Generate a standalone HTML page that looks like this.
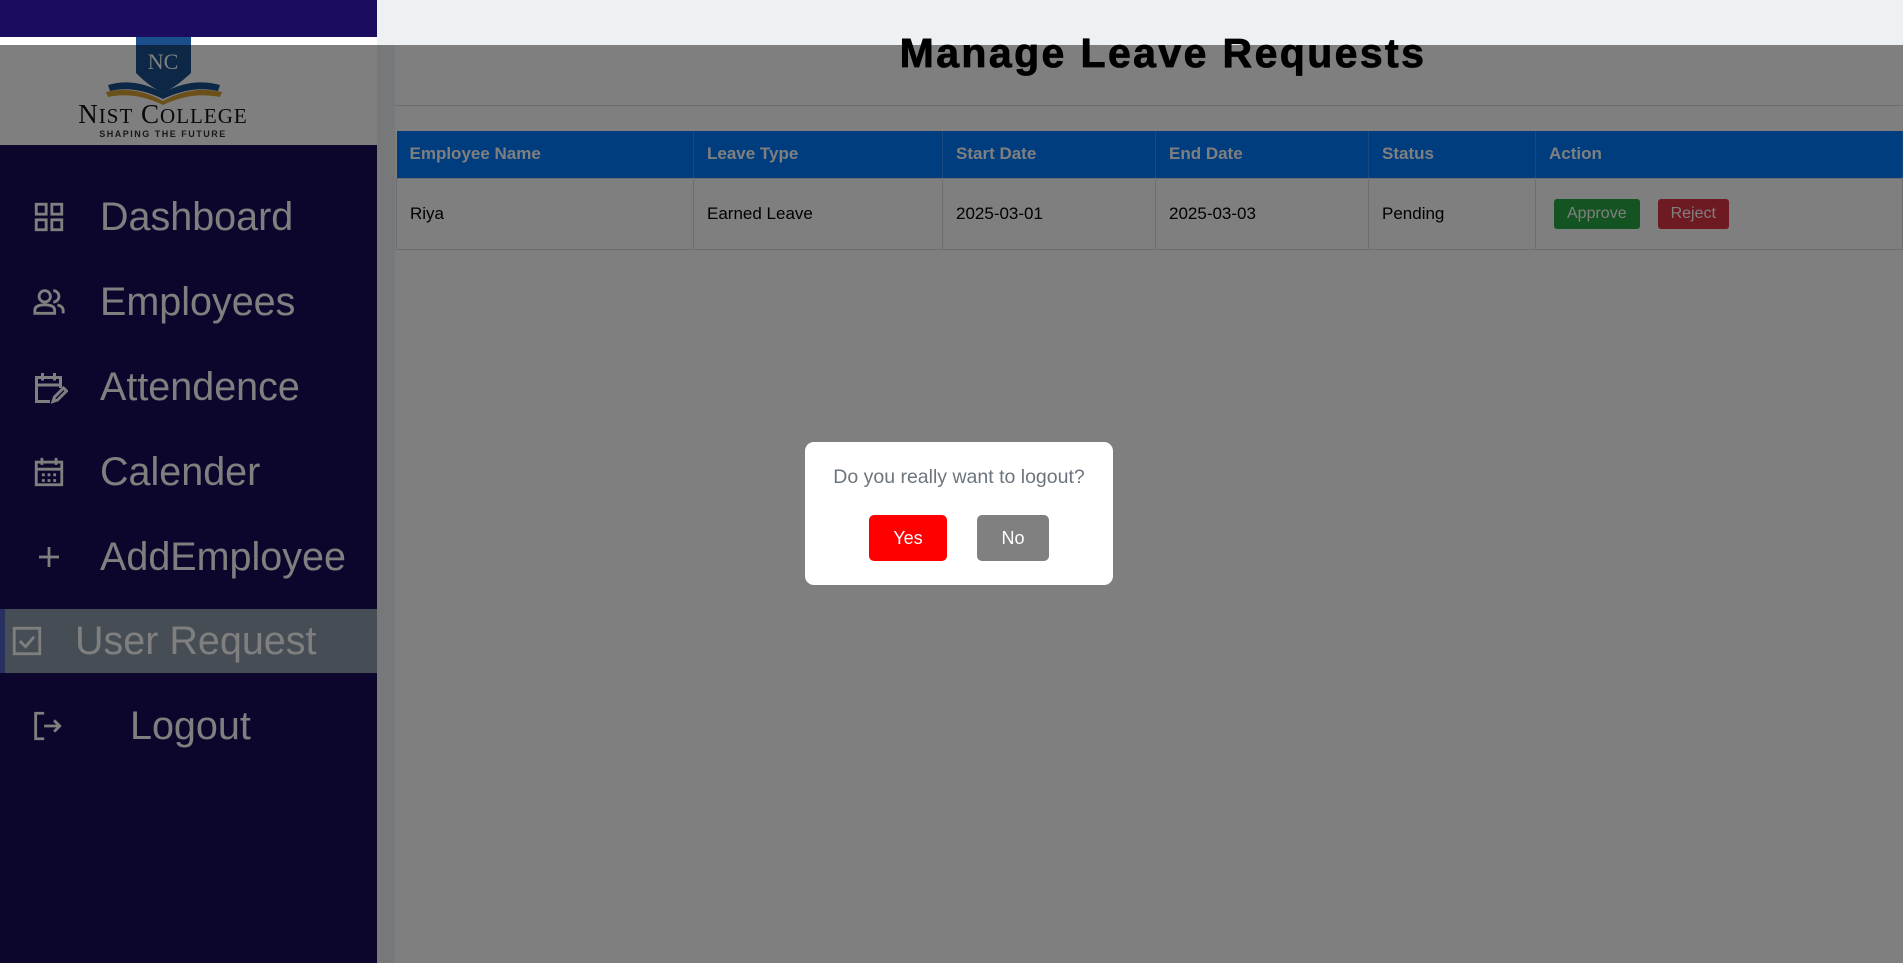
<!DOCTYPE html>
<html><head><meta charset="utf-8"><style>
*{margin:0;padding:0;box-sizing:border-box}
body{width:1903px;height:963px;overflow:hidden;background:#eef1f3;font-family:"Liberation Sans",sans-serif;position:relative}
.side{position:absolute;left:0;top:0;width:377px;height:963px;background:#180c5a}
.sidetop{position:absolute;left:0;top:0;width:377px;height:37px;background:#1c0c5f}
.logo{position:absolute;left:0;top:37px;width:377px;height:108px;background:#fff}
.item{position:absolute;left:0;width:377px;height:64px;color:#fff;font-size:39.5px;line-height:64px}
.item svg{position:absolute;top:15px}
.main{position:absolute;left:395px;top:45px;right:0;height:918px;background:#fff}
h1{position:absolute;left:423px;right:0;top:30px;text-align:center;font-size:41px;font-weight:bold;color:#000;letter-spacing:2.4px;-webkit-text-stroke:0.8px #000}
.hr{position:absolute;left:395px;right:0;top:105px;height:1px;background:#ddd}
table{position:absolute;left:396px;top:131px;width:1507px;border-collapse:collapse;font-size:17px}
th{background:#007bff;color:#fff;text-align:left;height:47px;padding:0 13px;font-weight:bold;border-right:1px solid #fff3}
td{height:71px;padding:0 13px;border:1px solid #ddd;color:#000}
.btn{display:inline-block;color:#fff;font-size:16px;padding:6px 13px;border-radius:3px}
.ov{position:absolute;left:0;top:45px;width:1903px;height:918px;background:rgba(0,0,0,.5)}
.modal{position:absolute;left:805px;top:442px;width:308px;height:143px;background:#fff;border-radius:9px;text-align:center}
.modal p{margin-top:24px;font-size:19.5px;color:#6c757d}
.mb{position:absolute;top:73px;height:46px;line-height:46px;color:#fff;font-size:18px;border-radius:5px}
</style></head><body>
<div class="main"></div>
<h1>Manage Leave Requests</h1>
<div class="hr"></div>
<table>
<tr><th style="width:297px">Employee Name</th><th style="width:249px">Leave Type</th><th style="width:213px">Start Date</th><th style="width:213px">End Date</th><th style="width:167px">Status</th><th>Action</th></tr>
<tr><td>Riya</td><td>Earned Leave</td><td>2025-03-01</td><td>2025-03-03</td><td>Pending</td><td><span class="btn" style="background:#28a745;margin-left:5px">Approve</span><span class="btn" style="background:#dc3545;margin-left:18px">Reject</span></td></tr>
</table>
<div class="side"></div>
<div class="sidetop"></div>
<div class="logo">
<svg width="377" height="108" viewBox="0 0 377 108">
<path d="M136 0 L163 -3 L191 0 L191 36 Q176 50 163 56 Q150 50 136 36 Z" fill="#1a4f8c"/>
<text x="163" y="32" font-family="Liberation Serif" font-size="22" fill="#fff" text-anchor="middle">NC</text>
<path d="M108 48 Q135 40 163 56 Q191 40 220 48 L218 54 Q192 48 163 62 Q134 48 110 54 Z" fill="#1a4f8c"/>
<path d="M106 55 Q135 48 163 64 Q191 48 222 55 L220 60 Q192 54 163 68 Q134 54 108 60 Z" fill="#d7a233"/>
<text x="163" y="86" font-family="Liberation Serif" font-size="27" fill="#111" text-anchor="middle" letter-spacing="1">N<tspan font-size="21">IST</tspan> C<tspan font-size="21">OLLEGE</tspan></text>
<text x="163" y="100" font-size="9" font-weight="bold" fill="#333" text-anchor="middle" letter-spacing="1.5">SHAPING THE FUTURE</text>
</svg></div>
<div class="item" style="top:185px"><svg style="left:32px" width="34" height="34" viewBox="0 0 24 24" fill="none" stroke="#fff" stroke-width="2"><rect x="3" y="3" width="7" height="7"/><rect x="14" y="3" width="7" height="7"/><rect x="3" y="14" width="7" height="7"/><rect x="14" y="14" width="7" height="7"/></svg><span style="position:absolute;left:100px">Dashboard</span></div>
<div class="item" style="top:270px"><svg style="left:30px" width="38" height="34" viewBox="0 0 24 24" fill="none" stroke="#fff" stroke-width="2"><circle cx="9" cy="8" r="4"/><path d="M2 20v-2q0-4 7-4t7 4v2z"/><path d="M15 4a4 4 0 0 1 0 8M18 14q4 1 4 4v2"/></svg><span style="position:absolute;left:100px">Employees</span></div>
<div class="item" style="top:355px"><svg style="left:32px" width="36" height="36" viewBox="0 0 24 24" fill="none" stroke="#fff" stroke-width="2"><path d="M12 21H3V5h16v7M3 10h16M7 2v5M15 2v5"/><path d="M14 21l1-3 6-6 2 2-6 6z"/></svg><span style="position:absolute;left:100px">Attendence</span></div>
<div class="item" style="top:440px"><svg style="left:32px" width="34" height="34" viewBox="0 0 24 24" fill="none" stroke="#fff" stroke-width="2"><rect x="3" y="5" width="18" height="16"/><path d="M3 10h18M7 2v5M17 2v5"/><path d="M7 14h2M11 14h2M15 14h2M7 18h2M11 18h2M15 18h2"/></svg><span style="position:absolute;left:100px">Calender</span></div>
<div class="item" style="top:525px"><svg style="left:34px" width="30" height="34" viewBox="0 0 24 24" fill="none" stroke="#fff" stroke-width="2.2"><path d="M12 4v16M4 12h16"/></svg><span style="position:absolute;left:100px">AddEmployee</span></div>
<div class="item" style="top:609px;background:#8c9aa9;border-left:5px solid #5060c0;height:64px"><svg style="left:5px" width="34" height="34" viewBox="0 0 24 24" fill="none" stroke="#fff" stroke-width="2"><rect x="3" y="3" width="18" height="18"/><path d="M7 12l4 4 6-7"/></svg><span style="position:absolute;left:70px">User Request</span></div>
<div class="item" style="top:694px"><svg style="left:30px" width="34" height="34" viewBox="0 0 24 24" fill="none" stroke="#fff" stroke-width="2"><path d="M10 3H4v18h6"/><path d="M10 12h11M17 8l4 4-4 4"/></svg><span style="position:absolute;left:130px">Logout</span></div>
<div class="ov"></div>
<div class="modal"><p>Do you really want to logout?</p>
<div class="mb" style="left:64px;width:78px;background:#f00">Yes</div>
<div class="mb" style="left:172px;width:72px;background:#808080">No</div></div>
</body></html>
